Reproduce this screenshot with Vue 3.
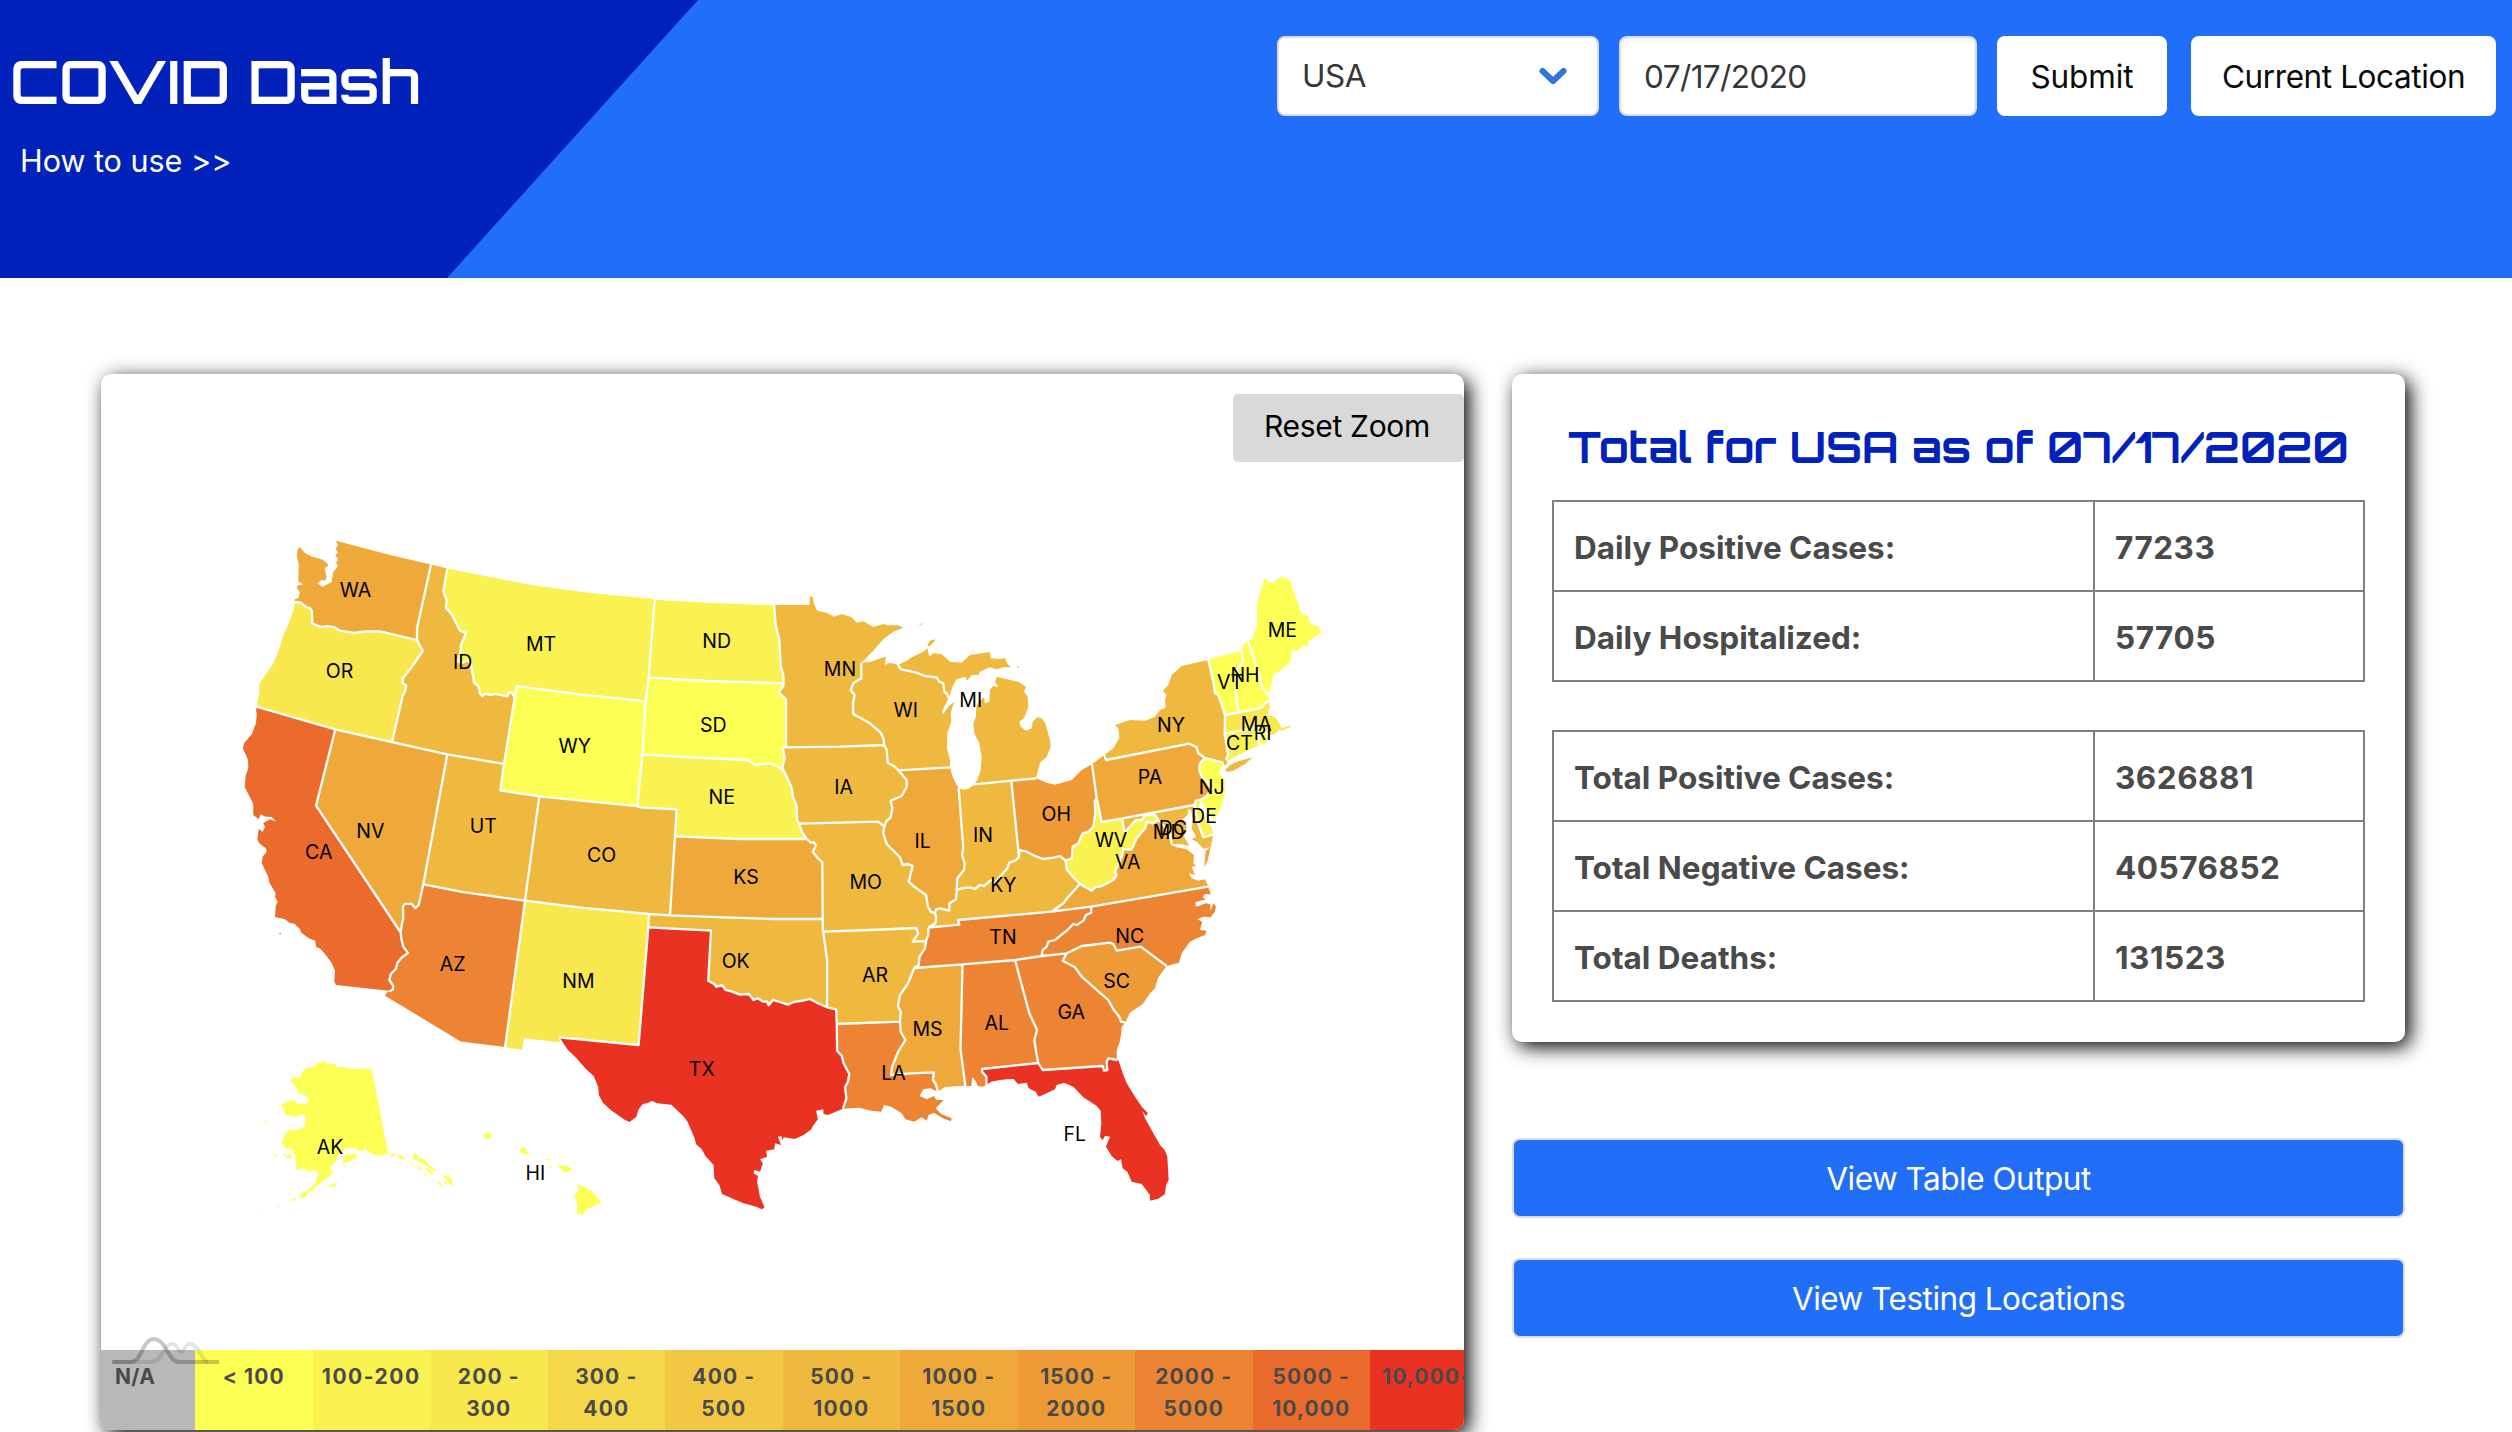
<script setup>
const bands = [
  { id: 'na', label: 'N/A', color: '#b8b8b8' },
  { id: 'b0', label: '< 100', color: '#fcff54' },
  { id: 'b1', label: '100-200', color: '#f9f250' },
  { id: 'b2', label: '200 - 300', color: '#f8e84e' },
  { id: 'b3', label: '300 - 400', color: '#f4d84a' },
  { id: 'b4', label: '400 - 500', color: '#f2c744' },
  { id: 'b5', label: '500 - 1000', color: '#efb93f' },
  { id: 'b6', label: '1000 - 1500', color: '#eea93a' },
  { id: 'b7', label: '1500 - 2000', color: '#ee9a37' },
  { id: 'b8', label: '2000 - 5000', color: '#ec8433' },
  { id: 'b9', label: '5000 - 10,000', color: '#eb6b2c' },
  { id: 'b10', label: '10,000+', color: '#ea3223' },
]

const daily = [['Daily Positive Cases:', '77233'], ['Daily Hospitalized:', '57705']]
const totals = [
  ['Total Positive Cases:', '3626881'],
  ['Total Negative Cases:', '40576852'],
  ['Total Deaths:', '131523'],
]

// Map sheets: origin x, origin y, units per pixel in x and y
const sheets = {
  A: [230, 520, 3, 2.8],
  B: [640, 560, 3, 3],
  C: [900, 560, 3, 3],
  D: [1040, 740, 3, 3],
  E: [500, 880, 2.8, 3],
  F: [80, 1040, 2.8, 3],
  G: [1060, 560, 3, 3],
}

// Border and coast lines. Two states in the key: shared border; one state: coast or outer border.
const lines = [
  ['WA', 'A 194,222 206,218 209,202 200,190 202,184 220,180 205,172 206,125 200,100 203,82 209,76 225,92 245,102 275,110 292,122 294,128 284,135 286,146 290,158 286,170 275,168 262,178 278,187 296,178 305,174 310,146 323,130 318,118 325,112 316,98 324,92 317,80 324,72 318,58 400,78 480,98 603,125'],
  ['WA ID', 'A 603,125 561,303 561,336'],
  ['WA OR', 'A 561,336 450,312 405,312 372,316 330,310 312,300 290,297 275,300 247,290 246,255 240,247 228,244 212,231 194,230'],
  ['OR', 'A 82,522 81,512 88,484 88,460 100,442 130,402 150,355 157,330 180,280 194,238'],
  ['OR ID', 'A 561,336 578,367 545,412 518,444 518,457 529,463 526,478 518,492 486,622'],
  ['OR NV', 'A 486,622 316,586'],
  ['OR CA', 'A 316,586 82,523'],
  ['ID', 'A 603,125 652,136'],
  ['ID MT', 'A 652,136 640,200 650,225 648,246 665,264 690,310 708,316 692,352 692,368 684,396 696,400 714,392 722,405 730,440 732,455 745,465 750,485 757,493 765,487 785,490 795,487 832,494 838,482 844,482 854,497'],
  ['MT WY', 'A 854,497 860,465 1050,488 1247,508'],
  ['ID WY', 'A 854,497 822,683'],
  ['WY UT', 'A 822,683 811,757 928,774'],
  ['ID UT', 'A 822,683 652,656'],
  ['ID NV', 'A 652,656 486,622'],
  ['WY CO', 'A 928,774 1100,790 1222,801'],
  ['WY NE', 'A 1222,801 1237,656'],
  ['WY SD', 'A 1237,656 1247,508'],
  ['MT SD', 'A 1247,508 1256,441'],
  ['MT ND', 'A 1256,441 1274,221'],
  ['MT', 'A 652,136 780,160 920,184 1080,204 1274,221'],
  ['CA NV', 'A 316,586 258,800 512,1155'],
  ['CA AZ', 'A 512,1155 514,1172 520,1195 534,1212 515,1225 502,1240 498,1256 482,1272 478,1288 490,1305 488,1315 478,1320'],
  ['CA', 'A 478,1318 318,1302 313,1292 315,1262 305,1240 285,1215 270,1200 258,1195 256,1178 235,1170 213,1155 210,1145 192,1130 180,1129 165,1118 135,1112 137,1080 143,1070 135,1055 137,1045 118,1015 115,1000 95,960 98,942 110,930 108,920 88,905 82,893 86,865 98,873 105,860 100,848 120,838 138,844 125,832 105,830 92,824 86,838 70,826 70,795 44,748 47,715 55,695 54,672 39,640 42,625 65,600 78,568 80,545 78,530 82,524'],
  ['NV UT', 'A 652,656 580,1020'],
  ['NV AZ', 'A 580,1020 566,1078 556,1087 545,1075 525,1075 519,1082 520,1115 516,1130 512,1155'],
  ['UT AZ', 'A 580,1020 700,1042 885,1066'],
  ['UT CO', 'A 928,774 885,1066'],
  ['AZ NM', 'A 885,1066 825,1478'],
  ['AZ', 'A 825,1476 692,1460 465,1332 472,1322 478,1320'],
  ['CO NM', 'A 885,1066 1060,1086 1257,1103'],
  ['CO OK', 'B 27,1062 90,1066'],
  ['CO KS', 'B 90,1066 105,829'],
  ['CO NE', 'A 1222,801 B 0,742 110,748 105,829'],
  ['NM OK', 'A 1257,1103 B 25,1102'],
  ['OK TX', 'B 25,1102 213,1112 E 583,302 600,312 606,320 622,316 632,330 650,335 672,344 697,342 710,360 722,355 735,364 748,365 752,376 764,360 790,368 806,374 822,366 848,362 868,357 890,370 916,382'],
  ['NM TX', 'B 25,1102 E 388,495 165,472'],
  ['NM', 'E 165,473 168,487 67,475 62,510 14,501'],
  ['TX', 'E 960,686 918,705 906,702 905,688 885,692 890,718 876,738 872,748 850,765 825,777 795,772 790,780 788,768 778,770 787,795 770,790 768,808 745,812 748,830 728,838 736,850 728,875 712,870 710,880 722,888 720,905 728,950 741,982 733,988 718,980 682,970 660,960 622,942 614,915 600,895 598,855 575,828 565,808 549,793 545,775 525,725 515,710 480,674 440,670 425,663 412,670 400,672 388,688 382,710 363,726 350,720 310,690 288,668 277,645 275,620 262,588 240,566 213,533 190,510 168,475'],
  ['TX LA', 'E 943,432 944,512 957,528 962,550 978,582 974,605 966,622 970,655 960,686'],
  ['TX AR', 'E 916,382 941,388 943,432'],
  ['OK AR', 'E 916,382 916,240 905,157'],
  ['OK MO', 'B 549,1115 548,1077'],
  ['OK KS', 'B 548,1077 400,1077 250,1072 90,1066'],
  ['KS MO', 'B 548,1077 547,907 534,895 518,875 528,856 522,847 512,848 500,837'],
  ['KS NE', 'B 105,829 300,837 500,837'],
  ['NE MO', 'B 500,837 485,815 477,791'],
  ['NE IA', 'B 477,791 471,780 470,738 460,715 455,685 440,650 432,634'],
  ['NE SD', 'B 432,634 415,620 390,610 365,612 350,616 335,608 323,600 150,592 7,583'],
  ['SD IA', 'B 432,634 427,622 434,595 428,562'],
  ['SD MN', 'B 428,562 438,560 438,418 428,408 416,397 430,378 431,370'],
  ['SD ND', 'B 431,370 200,363 28,353'],
  ['ND MN', 'B 431,370 430,345 422,318 418,240 407,195 402,136'],
  ['ND', 'B 42,119 200,128 300,132 402,136'],
  ['MN IA', 'B 428,562 600,560 732,555'],
  ['MN WI', 'B 732,555 731,538 722,518 690,490 640,462 639,430 644,405 632,390 640,370 664,355 664,308'],
  ['MN', 'B 402,135 508,135 510,108 519,112 522,132 532,152 560,158 582,170 605,162 635,172 650,188 670,184 700,201 730,192 745,196 775,196 790,203 760,215 730,238 700,272 664,308'],
  ['WI', 'B 664,308 690,306 715,297 738,290 734,315 750,308 774,315'],
  ['WI MI', 'B 774,315 783,328 830,338 855,348 890,352 898,365 910,370 913,395 922,402 926,415'],
  ['WI', 'B 926,415 918,430 906,455 910,462 925,440 942,425 932,460 934,485 922,520 921,565 930,600 930,622'],
  ['WI IL', 'B 930,622 775,631'],
  ['WI IA', 'B 732,555 740,570 743,608 765,620 775,631'],
  ['IL IA', 'B 775,631 800,660 800,680 785,708 752,722 757,745 752,772 738,785 733,800'],
  ['IA MO', 'B 733,800 715,785 600,788 477,791'],
  ['IL MO', 'B 733,800 730,820 740,852 780,892 788,915 805,912 818,918 806,965 825,982 858,1005 864,1040 872,1055 885,1060'],
  ['IL KY', 'B 885,1060 888,1048 900,1045 928,1052 928,1030 948,1018 950,990'],
  ['IL IN', 'B 950,990 952,955 972,930 974,910 966,885 970,865 956,685'],
  ['IL', 'B 930,622 938,650 950,675 956,685'],
  ['IN', 'B 956,685 970,689 985,686 1003,674'],
  ['IN MI2', 'C 223,673 334,662'],
  ['IN OH', 'C 334,662 357,892'],
  ['IN KY', 'C 357,892 345,902 328,908 322,925 300,950 285,970 272,960 262,970 252,978 240,975 225,987 210,982 185,985 170,990'],
  ['MI2 OH', 'C 334,662 408,655'],
  ['MI2', 'C 408,655 420,608 440,590 452,560 450,540 436,490 425,475 412,472 398,485 395,505 378,512 362,500 358,485 372,475 385,440 383,410 372,395 378,380 355,365 330,360 290,350 285,365 295,380 278,378 270,390 268,425 255,430 252,412 235,425 229,440 228,470 220,490 223,520 238,550 245,590 242,630 232,660 223,672'],
  ['MI', 'B 774,315 800,302 815,292 850,275 862,265 868,290 880,280 905,283 930,305 965,308 990,285 1050,276 1052,295 C 300,297 315,294 320,308 332,322 310,322 290,328 268,322 240,335 235,345 215,345 202,362 195,350 170,358 158,378 148,410 146,415'],
  ['OH', 'C 408,655 440,668 465,674 515,660 545,630 576,613'],
  ['OH PA', 'C 576,613 590,715'],
  ['OH WV', 'C 590,715 584,722 586,760 580,800 565,815 548,820 535,850 518,860 515,895 497,902'],
  ['OH KY', 'C 497,902 480,888 460,893 430,897 405,888 380,875 358,870 357,892'],
  ['KY WV', 'C 497,902 500,928 520,952 540,972'],
  ['KY VA', 'C 540,972 505,1010 490,1030 455,1055'],
  ['KY TN', 'C 455,1055 320,1067 175,1080 178,1094 85,1103'],
  ['KY MO', 'B 885,1060 889,1070 886,1090 865,1103'],
  ['MO TN', 'B 865,1103 865,1125 858,1143'],
  ['MO AR', 'B 549,1115 690,1110 829,1104 835,1120 818,1145 858,1143'],
  ['TN AR', 'E 1193,183 1190,205 1175,230 1172,255 1160,264'],
  ['AR MS', 'E 1160,264 1150,290 1140,315 1120,345 1114,378 1122,395 1120,425'],
  ['AR LA', 'E 1120,425 943,432'],
  ['LA MS', 'E 1120,425 1122,455 1135,480 1115,515 1098,560 1095,585 1150,580 1215,577 1212,600 1220,612 1226,635'],
  ['TN MS', 'E 1160,264 1295,253'],
  ['TN AL', 'E 1295,253 1442,240'],
  ['TN GA', 'E 1442,240 D 5,648'],
  ['TN NC', 'D 5,648 8,630 20,620 25,605 45,600 80,572 100,552 110,555 130,542 138,525 154,518 153,500'],
  ['TN VA', 'D 153,500 35,515'],
  ['VA NC', 'D 153,500 330,470 504,440'],
  ['GA NC', 'D 5,648 80,640'],
  ['NC SC', 'D 80,640 125,618 210,608 220,612 230,632 302,620 380,678'],
  ['GA SC', 'D 80,640 68,662 105,682 125,710 170,750 205,780 220,808 238,830 243,845 256,848'],
  ['NC', 'D 504,440 513,463 495,462 488,472 498,478 466,487 468,500 498,490 510,493 512,512 520,490 528,500 524,515 512,532 490,530 472,538 487,545 480,570 500,572 495,585 470,595 450,605 425,640 417,668 380,678'],
  ['SC', 'D 380,678 355,712 345,745 330,760 308,792 285,808 270,818 262,835 256,848'],
  ['GA', 'D 256,848 245,860 243,885 238,910 230,930 230,958'],
  ['GA FL', 'D 232,960 205,955 200,965 202,990 192,992 188,978 8,990 -5,969'],
  ['AL GA', 'E 1442,240 1482,400 1504,450 1496,480 1502,520 1507,549'],
  ['AL FL', 'E 1507,549 1350,567 1350,575 1362,590 1362,615'],
  ['AL', 'E 1303,618 1320,618 1322,592 1330,600 1338,618 1350,620 1362,615'],
  ['MS AL', 'E 1295,253 1292,400 1289,505 1303,618'],
  ['MS', 'E 1226,635 1245,622 1280,618 1303,618'],
  ['LA', 'E 1226,635 1205,625 1185,628 1175,648 1195,658 1215,648 1222,660 1242,660 1220,685 1235,702 1265,715 1262,724 1240,715 1215,698 1200,705 1195,722 1180,712 1160,725 1135,718 1125,700 1095,680 1075,675 1068,695 1040,692 1005,683 960,686'],
  ['FL', 'E 1362,615 1375,605 1400,600 1420,598 1438,597 1450,612 1475,608 1480,625 1500,635 1508,650 D 20,1060 45,1048 50,1035 72,1028 100,1040 130,1072 170,1098 182,1112 184,1150 180,1192 188,1200 195,1188 210,1190 198,1220 215,1248 232,1263 243,1258 248,1285 262,1295 275,1325 305,1332 330,1365 330,1382 355,1376 375,1362 378,1335 386,1320 382,1250 374,1230 360,1215 315,1135 307,1112 318,1128 324,1120 305,1100 280,1062 260,1030 248,1000 236,962'],
  ['PA', 'C 576,613 613,585'],
  ['PA NY', 'C 613,585 618,600 868,551 890,562 895,580 915,594'],
  ['PA NJ', 'G 435,594 420,610 418,630 424,648 440,665 455,688 440,708 425,718'],
  ['PA DE', 'G 425,718 408,722 403,735'],
  ['PA MD', 'G 403,735 187,775'],
  ['PA WV', 'G 187,775 125,786 110,715'],
  ['MD WV', 'G 187,775 193,818 205,805 228,780 245,780 255,765 285,765 295,780'],
  ['MD VA', 'G 295,780 315,800 330,820 335,852'],
  ['WV VA', 'G 60,972 95,992 105,982 125,978 160,960 170,945 165,935 185,890 190,868 215,868 230,835 255,805 262,785 278,790 295,780'],
  ['MD DE', 'G 403,735 415,790 430,832 460,823'],
  ['DE', 'G 460,823 455,800 440,785 425,755 415,740 425,718'],
  ['MD', 'G 460,823 452,862 430,866 410,845 395,838 408,830 395,805 400,780 393,750 385,748 383,765 365,780 380,800 372,830 388,857 360,852 335,852'],
  ['VA', 'G 335,855 D 392,315 410,322 440,328 462,345 460,370 468,378 455,380 465,405 447,400 455,415 475,422 495,418 505,438'],
  ['NY NJ', 'G 435,594 490,608'],
  ['NJ', 'G 490,608 478,640 495,660 494,705 480,750 465,780 450,765 440,750 428,730 425,718'],
  ['NY', 'C 613,585 640,565 658,535 655,505 645,495 690,480 735,482 765,470 780,450 797,443 795,420 800,405 788,393 805,375 815,345 845,318 925,300'],
  ['NY VT', 'C 925,300 940,365 945,400 955,405 975,465'],
  ['NY MA', 'C 975,465 974,521'],
  ['NY CT', 'C 974,521 984,585 978,600'],
  ['NY', 'C 978,600 983,605 976,618 970,608'],
  ['VT', 'C 930,297 1025,272'],
  ['VT NH', 'C 1025,275 1028,305 1012,325 1006,370 1010,420 1013,445 1018,457'],
  ['VT MA', 'C 975,465 1018,457'],
  ['NH MA', 'C 1018,457 1082,444 1100,425 1106,425'],
  ['NH', 'C 1027,272 1030,250 1045,246'],
  ['NH ME', 'C 1045,246 1070,320 1088,385 1105,405'],
  ['NH', 'C 1105,405 1106,425'],
  ['ME', 'G 566,244 580,235 583,215 592,195 590,160 595,115 613,58 618,55 625,66 640,68 665,48 690,62 725,163 745,168 750,190 765,197 775,197 785,218 765,230 745,243 745,257 730,258 710,275 695,268 692,305 660,332 640,345 628,400 625,405'],
  ['MA CT', 'G 494,521 592,503'],
  ['MA RI', 'G 592,503 610,500 625,530'],
  ['MA', 'G 628,428 630,440 622,465 645,472 658,490 665,505 693,495 690,502 665,512 655,510 645,522 632,525 625,532'],
  ['CT RI', 'G 592,503 598,555'],
  ['CT', 'G 598,555 560,572 525,590 503,602 498,600'],
  ['RI', 'G 598,555 618,548 625,530'],
]

const islands = [
  ['CA', 'A 148,1156 153,1156 153,1159 148,1159'],
  ['MI', 'B 862,254 870,242 884,238 884,244 868,260'],
  ['MI', 'B 828,204 846,190 850,190'],
  ['MI', 'C 350,321 358,318 356,325'],
  ['NY', 'C 975,630 990,615 1010,605 1058,592 1035,612 1000,632 980,635'],
  ['VA', 'D 512,320 497,333 492,382 503,362'],
  ['AK', 'F 863,343 835,348 815,340 797,325 790,335 770,325 745,325 725,345 715,365 700,385 708,398 685,420 670,432 650,450 640,458 632,470 615,474 615,465 640,450 660,425 668,400 660,390 640,395 625,385 607,392 603,350 590,325 575,325 565,310 570,290 585,270 605,270 628,262 632,235 625,222 600,230 575,225 570,205 562,195 585,182 598,180 605,190 630,192 642,183 630,165 612,160 605,140 590,125 592,115 615,112 625,92 640,82 658,82 660,70 675,70 682,60 690,70 712,72 720,80 745,82 760,86 790,86 805,84 818,92'],
  ['AK', 'F 735,372 740,345 772,340 775,352 755,364'],
  ['AK', 'F 697,440 703,432 722,428 718,436 705,442'],
  ['AK', 'F 568,340 583,348 592,335 592,357 580,355'],
  ['AK', 'F 583,488 597,474 608,480 592,482'],
  ['AK', 'F 546,500 563,494 560,499'],
  ['AK', 'F 540,347 548,341 554,346 547,350'],
  ['AK', 'F 516,240 520,242 526,254 522,252'],
  ['AK', 'F 509,515 513,515 511,519'],
  ['AK', 'F 736,382 745,374 748,377'],
  ['AK', 'F 868,342 886,341 882,349 872,351'],
  ['AK', 'F 888,345 902,347 916,358 905,358 892,354'],
  ['AK', 'F 918,365 936,372 930,376'],
  ['AK', 'F 930,348 936,340 944,342 943,352 965,358 975,372 998,390 994,395 975,380 950,365 935,358'],
  ['AK', 'F 940,375 956,382 954,392'],
  ['AK', 'F 955,398 975,408 968,410'],
  ['AK', 'F 962,382 978,386 990,402 986,406 972,390'],
  ['AK', 'F 1010,405 1034,409 1042,420 1043,440 1032,428 1024,415'],
  ['AK', 'F 1000,422 1008,427 1020,445 1006,436'],
  ['AK', 'F 1018,420 1026,426 1028,436 1020,430'],
  ['HI', 'F 1126,287 1140,276 1152,280 1151,292 1138,298'],
  ['HI', 'F 1229,330 1245,321 1255,338 1264,345 1240,341'],
  ['HI', 'F 1298,357 1310,357 1323,361 1310,361'],
  ['HI', 'F 1313,380 1320,380 1322,385 1316,386'],
  ['HI', 'F 1338,372 1352,378 1365,378 1378,388 1360,399 1350,392 1342,382'],
  ['HI', 'F 1393,432 1430,450 1442,465 1461,486 1420,508 1405,525 1392,520 1392,490 1383,468 1396,450'],
]

// state: [band, label x, label baseline]
const states = {
  WA: [6, 355.5, 597], OR: [2, 339.5, 678], CA: [9, 318.7, 858.6], ID: [5, 462.7, 669], MT: [1, 541, 651],
  WY: [0, 574.7, 753], NV: [6, 370.3, 837.5], UT: [5, 483.3, 833], CO: [5, 601.7, 862], AZ: [8, 452.7, 970.7],
  NM: [2, 578.5, 987.5], ND: [1, 716.7, 648], MN: [5, 840, 675.7], SD: [0, 713.3, 732], WI: [5, 905.7, 716.7],
  MI: [5, 970.7, 706.7], IA: [5, 843.7, 794], NE: [1, 721.7, 804], IL: [6, 922.7, 848], IN: [5, 983, 841.7],
  KS: [6, 746, 884], MO: [5, 865.7, 889], OH: [7, 1056.3, 821], PA: [6, 1150, 783.7], NY: [5, 1171, 731.7],
  ME: [0, 1282.3, 637], VT: [0, 1230, 689], NH: [0, 1245, 682], MA: [2, 1256.3, 730.7], RI: [0, 1262.7, 740],
  CT: [1, 1239.5, 749.7], NJ: [0, 1211.7, 794], DE: [1, 1204, 822.7], DC: [5, 1173, 834.7], MD: [5, 1168.7, 838.7],
  WV: [1, 1111, 846.7], VA: [6, 1127.7, 868.7], KY: [5, 1003.3, 891.7], TN: [8, 1003, 943.7], NC: [8, 1129.7, 943],
  SC: [7, 1116.7, 987.7], GA: [8, 1071.3, 1018.7], FL: [10, 1074.7, 1141], OK: [5, 735.7, 968], TX: [10, 701.8, 1075.7],
  AR: [5, 875, 982], MS: [6, 927.5, 1035.7], AL: [8, 996.8, 1029.7], LA: [8, 893.6, 1080], HI: [0, 535.4, 1180],
  AK: [0, 330, 1154],
}

const colorOf = (code) => bands[states[code.slice(0, 2)][0] + 1].color

function project(text) {
  let sheet
  const out = []
  for (const token of text.split(' ')) {
    if (sheets[token]) {
      sheet = sheets[token]
      continue
    }
    const [x, y] = token.split(',').map(Number)
    out.push([sheet[0] + x / sheet[2], sheet[1] + y / sheet[3]])
  }
  return out
}

const toPath = (pts) => 'M' + pts.map((p) => p[0].toFixed(1) + ' ' + p[1].toFixed(1)).join('L')
const gap = (a, b) => Math.hypot(a[0] - b[0], a[1] - b[1])

const arcs = lines.map(([key, text]) => ({ owners: key.split(' '), pts: project(text) }))

// Joins a state's border pieces end to end into one ring
function ring(code) {
  const rest = arcs.filter((a) => a.owners.includes(code)).map((a) => a.pts)
  const out = [...rest.shift()]
  while (rest.length) {
    const end = out[out.length - 1]
    let best = { d: Infinity }
    rest.forEach((pts, i) => {
      const head = gap(end, pts[0])
      const tail = gap(end, pts[pts.length - 1])
      if (head < best.d) best = { d: head, i, flip: false }
      if (tail < best.d) best = { d: tail, i, flip: true }
    })
    const [next] = rest.splice(best.i, 1)
    out.push(...(best.flip ? [...next].reverse() : next))
  }
  return out
}

const codes = [...new Set(arcs.flatMap((a) => a.owners))]
const shapes = [
  ...codes.map((c) => ({ d: toPath(ring(c)) + 'Z', fill: colorOf(c) })),
  ...islands.map(([c, t]) => ({ d: toPath(project(t)) + 'Z', fill: colorOf(c) })),
]
const borders = arcs.filter((a) => a.owners.length === 2).map((a) => toPath(a.pts)).join('')
const labels = Object.entries(states).map(([code, s]) => ({ code, x: s[1], y: s[2] }))
</script>

<template>
  <div class="page">
    <header class="hero">
      <div class="brand">
        <h1>COVID Dash</h1>
        <a class="help">How to use &gt;&gt;</a>
      </div>
      <div class="controls">
        <div class="field select">
          <span>USA</span>
          <svg width="30" height="22" viewBox="0 0 30 22"><path d="M4.5 6 15 16 25.5 6" fill="none" stroke="#3273dc" stroke-width="6" stroke-linecap="round" stroke-linejoin="round" /></svg>
        </div>
        <div class="field date">07/17/2020</div>
        <button class="btn submit">Submit</button>
        <button class="btn locate">Current Location</button>
      </div>
    </header>

    <main class="content">
      <section class="card map-card">
        <svg class="map" viewBox="101 374 1363 976" width="1363" height="976">
          <path v-for="(s, i) in shapes" :key="i" :d="s.d" :fill="s.fill" />
          <path :d="borders" class="borders" />
          <text v-for="l in labels" :key="l.code" :x="l.x" :y="l.y">{{ l.code }}</text>
        </svg>
        <button class="reset">Reset Zoom</button>
        <div class="legend">
          <div v-for="b in bands" :key="b.id" class="band" :class="b.id" :style="{ background: b.color }">{{ b.label }}</div>
        </div>
        <svg class="mark" width="110" height="30" viewBox="0 0 110 30">
          <path d="M2 26H40C52 26 52 8 61 8 67 8 67 16 70 16S74 8 79 8C88 8 91 26 97 26" fill="none" stroke="#000" stroke-opacity=".1" stroke-width="4" />
          <path d="M1 26H20C31 26 31 3 43 3S57 26 68 26H108" fill="none" stroke="#000" stroke-opacity=".22" stroke-width="4" />
        </svg>
      </section>

      <aside class="side">
        <section class="card stats">
          <h2>Total for USA as of 07/17/2020</h2>
          <table>
            <tbody>
              <tr v-for="r in daily" :key="r[0]"><td>{{ r[0] }}</td><td>{{ r[1] }}</td></tr>
            </tbody>
          </table>
          <table>
            <tbody>
              <tr v-for="r in totals" :key="r[0]"><td>{{ r[0] }}</td><td>{{ r[1] }}</td></tr>
            </tbody>
          </table>
        </section>
        <button class="action">View Table Output</button>
        <button class="action">View Testing Locations</button>
      </aside>
    </main>
  </div>
</template>

<style>
body {
  margin: 0;
  background: #fff;
  overflow: hidden;
}
</style>

<style scoped>
.page {
  width: 2512px;
  height: 1432px;
  overflow: hidden;
  background: #fff;
  font-family: Inter, "Liberation Sans", sans-serif;
  color: #4a4a4a;
}
.page * {
  box-sizing: border-box;
}
button {
  font: inherit;
  letter-spacing: inherit;
  border: 0;
  margin: 0;
  padding: 0;
}
.hero {
  height: 278px;
  display: flex;
  justify-content: space-between;
  background: #216ef8;
}
.brand {
  width: 698px;
  height: 278px;
  background: #0022bb;
  clip-path: polygon(0 0, 698px 0, 447px 278px, 0 278px);
  color: #fff;
}
h1 {
  margin: 46px 0 0 10px;
  font: 600 60px/70px Orbitron, "DejaVu Sans", sans-serif;
  letter-spacing: 0;
  white-space: nowrap;
}
.help {
  display: block;
  margin: 25px 0 0 20px;
  font-size: 30.5px;
  line-height: 40px;
}
.controls {
  display: flex;
  padding: 36px 16px 0 0;
  font-size: 31.5px;
  letter-spacing: -0.4px;
}
.field,
.btn {
  height: 80px;
  border-radius: 8px;
  background: #fff;
  line-height: 80px;
}
.field {
  border: 2px solid #dbdbdb;
  line-height: 78px;
  padding: 0 23px;
  color: #363636;
  margin-right: 20px;
}
.select {
  width: 322px;
  display: flex;
  justify-content: space-between;
  align-items: center;
  padding-right: 29px;
}
.date {
  width: 358px;
  letter-spacing: -0.6px;
  box-shadow: inset 0 2px 4px rgba(10, 10, 10, 0.07);
}
.btn {
  color: #0a0a0a;
  padding-top: 1px;
}
.submit {
  width: 170px;
  margin-right: 24px;
  letter-spacing: -0.1px;
}
.locate {
  width: 305px;
}
.content {
  display: flex;
  gap: 48px;
  padding: 96px 0 0 101px;
  align-items: flex-start;
}
.card {
  background: #fff;
  border-radius: 10px;
  box-shadow: 5px 5px 20px #000;
}
.map-card {
  position: relative;
  width: 1363px;
  height: 1056px;
}
.map {
  display: block;
}
.map text {
  font-size: 19.5px;
  text-anchor: middle;
  fill: #000;
}
.borders {
  fill: none;
  stroke: #fff;
  stroke-width: 2.3;
  stroke-linejoin: round;
}
.reset {
  position: absolute;
  right: 0;
  top: 20px;
  width: 231px;
  height: 68px;
  border-radius: 5px;
  background: #d9d9d9;
  font-size: 30px;
  letter-spacing: -0.3px;
  color: #000;
  padding-bottom: 5px;
  padding-right: 3px;
}
.legend {
  display: flex;
  height: 80px;
  overflow: hidden;
  border-radius: 0 0 10px 10px;
}
.band {
  flex: 0 0 117.5px;
  padding: 11px 14px 0;
  font-size: 21px;
  line-height: 32px;
  font-weight: 700;
  letter-spacing: 1.1px;
  text-align: center;
}
.na {
  flex-basis: 94px;
  text-align: left;
  letter-spacing: 0.3px;
}
.b1 {
  padding: 11px 0 0;
  letter-spacing: 1.5px;
}
.b10 {
  text-align: left;
  padding: 11px 0 0 12px;
}
.mark {
  position: absolute;
  left: 10px;
  top: 962px;
}
.side {
  width: 893px;
}
.stats {
  height: 668px;
  padding: 43px 40px 0;
}
h2 {
  margin: 0 0 23px;
  font: 700 43.7px/60px Orbitron, "DejaVu Sans", sans-serif;
  text-align: center;
  white-space: nowrap;
  color: #0022bb;
}
table {
  width: 813px;
  table-layout: fixed;
  border-collapse: collapse;
  margin-bottom: 48px;
}
td {
  height: 90px;
  padding: 2px 20px 0;
  border: 2px solid #808080;
  font-size: 31.5px;
  font-weight: 700;
}
td:first-child {
  width: 541px;
}
td:last-child {
  letter-spacing: 0.5px;
}
.action {
  display: block;
  width: 893px;
  height: 80px;
  margin: 96px 0 0;
  border: 2px solid #dbdbdb;
  border-radius: 8px;
  background: #216ef8;
  color: #fff;
  font-size: 31.5px;
  letter-spacing: -0.5px;
}
.action + .action {
  margin-top: 40px;
}
</style>
